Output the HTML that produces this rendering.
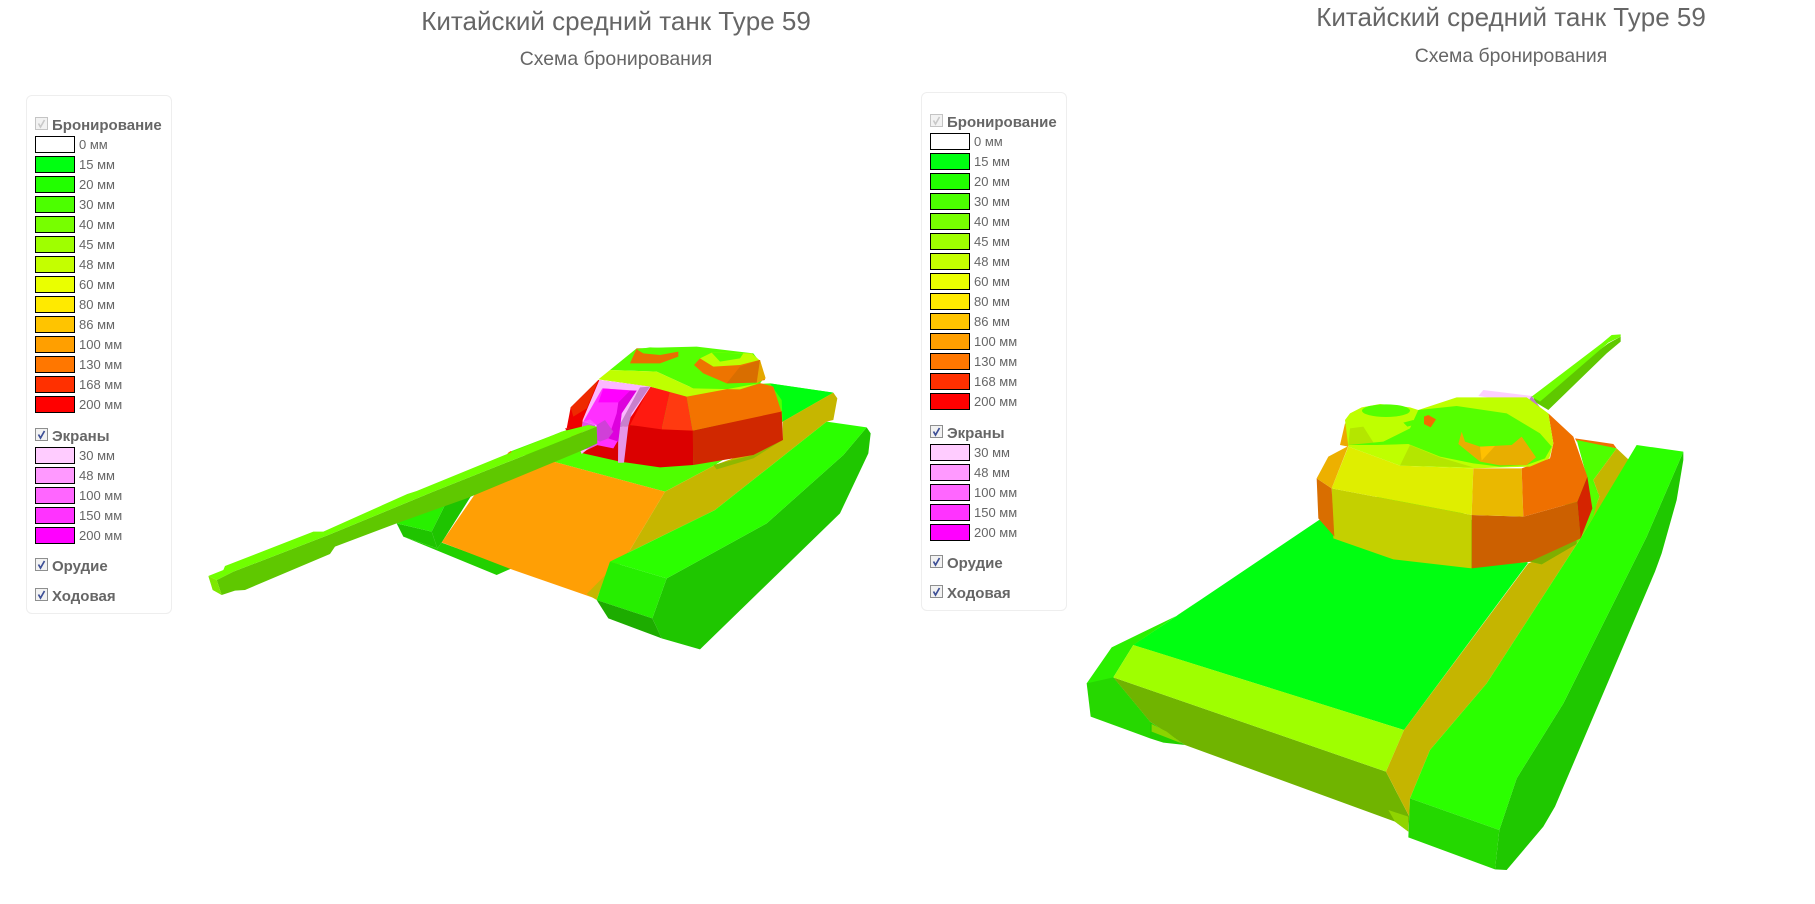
<!DOCTYPE html>
<html lang="ru"><head><meta charset="utf-8"><title>Type 59</title>
<style>
html,body{margin:0;padding:0;background:#fff;width:1815px;height:904px;overflow:hidden}
body{position:relative;font-family:"Liberation Sans",Arial,sans-serif;color:#666}
.t{position:absolute;white-space:nowrap;text-align:center;transform:translateX(-50%)}
.h{font-size:26px;line-height:30px}
.s{font-size:19.4px;line-height:22px}
.p{position:absolute;width:146px;height:519px;box-sizing:border-box;border:1px solid #eee;border-radius:6px;background:#fff}
.p div{position:absolute;white-space:nowrap}
.p .c{left:8px;width:13px;height:13px}
.p .c svg{display:block}
.p .b{left:25px;font-weight:bold;font-size:15px;line-height:17px;color:#666}
.p .w{left:8px;width:40px;height:17px;box-sizing:border-box;border:1px solid #000}
.p .l{left:52px;font-size:13px;line-height:17px;color:#666}
svg.m{position:absolute;left:0;top:0}
</style></head><body>

<svg class="m" width="1815" height="904" viewBox="0 0 1815 904" xmlns="http://www.w3.org/2000/svg">
<!-- LEFT TANK: far track -->
<g transform="translate(200 420) scale(.33333)">
<polygon fill="#22d000" points="610,350 712,385 725,368 935,445 890,465"/>
<polygon fill="#1fc400" points="590,310 695,335 712,385 610,350"/>
<polygon fill="#28f000" points="590,310 600,300 820,218 735,255 695,335"/>
<polygon fill="#1ec400" points="695,335 735,255 815,225 725,368 712,385"/>
</g>
<!-- hull -->
<g transform="translate(400 370) scale(.33333)">
<polygon fill="#4fff00" points="1110,40 1300,68 1148,155 945,285 795,365 460,275 330,245 500,180 700,60"/>
<polygon fill="#00ff11" points="1110,40 1300,68 1148,155 1145,90"/>
<polygon fill="#f07000" points="322,250 332,243 340,250 330,255"/>
<polygon fill="#ff9f05" points="460,275 795,365 690,540 585,685 340,600 125,517 228,368"/>
<polygon fill="#c6b600" points="795,365 945,285 1148,210 1148,155 1300,68 1312,85 1300,150 1280,155 945,420 630,575 590,690 560,672 690,540"/>
<polygon fill="#8fb800" points="940,285 950,298 1060,265 1140,215 1060,255"/>
<polygon fill="#1fc600" points="1400,172 1412,190 1405,250 1320,430 900,838 785,805 757,745 800,625 1100,460 1330,255"/>
<polygon fill="#2bff00" points="1280,155 1400,172 1330,255 1100,460 800,625 630,575 945,420"/>
<polygon fill="#26ee00" points="630,575 800,625 757,745 590,690"/>
<polygon fill="#1dac00" points="590,690 757,745 785,805 625,745"/>
</g>
<!-- left turret -->
<g transform="translate(540 330) scale(.33333)">
<polygon fill="#db0000" points="75,295 130,370 240,395 360,412 460,405 460,300 270,285"/>
<polygon fill="#d02800" points="458,302 725,243 729,330 640,375 460,405"/>
<polygon fill="#f00000" points="80,295 92,232 175,150 330,170 270,290"/>
<polygon fill="#ff1a10" points="330,170 390,185 365,298 270,285"/>
<polygon fill="#ff3a10" points="390,185 440,200 458,302 365,298"/>
<polygon fill="#ee2a00" points="92,232 175,150 140,235 100,260"/>
<polygon fill="#f37300" points="440,200 655,158 700,170 724,245 458,302"/>
<polygon fill="#55ff00" points="210,120 290,55 380,52 470,50 640,70 655,90 675,140 660,160 600,178 460,175 350,125"/>
<polygon fill="#bfff00" points="175,148 210,120 350,125 460,175 600,178 680,152 655,160 440,200 330,170"/>
<polygon fill="#e87000" points="270,100 290,55 415,65 415,80 360,100"/>
<polygon fill="#55ff00" points="290,58 330,52 390,55 415,65 360,75 310,70"/>
<polygon fill="#ee7400" points="462,105 480,85 660,90 675,150 650,155 560,160 490,130"/>
<polygon fill="#d96e00" points="560,160 600,110 660,90 650,158"/>
<polygon fill="#e5a800" points="660,90 677,145 650,160"/>
<polygon fill="#bfff00" points="480,85 515,68 635,70 658,90 600,105 520,110"/>
<polygon fill="#55ff00" points="515,68 610,70 600,85 540,95"/>
</g>
<!-- mantlet -->
<g transform="translate(400 370) scale(.33333)">
<polygon fill="#fbb8ff" points="598,30 752,50 700,130 672,170 670,278 655,278 655,195 560,240 545,252 540,240 548,150"/>
<polygon fill="#c880cc" points="720,52 750,50 695,130 685,168 655,172"/>
<polygon fill="#e596e8" points="655,172 685,168 672,278 654,278 655,205"/>
<polygon fill="#ff30ff" points="607,55 710,62 665,130 655,210 640,235 590,225 590,165 550,155"/>
<polygon fill="#ff00ff" points="610,55 690,62 655,97 595,97"/>
<polygon fill="#dd00dd" points="690,62 710,62 665,130 655,215 625,205 650,130 655,97"/>
<polygon fill="#d040d8" points="590,165 615,150 640,185 625,205 600,215 590,210"/>
<polygon fill="#e050e8" points="548,155 585,165 590,225 570,235 540,240"/>
<polygon fill="#ff50ff" points="550,155 570,148 590,165"/>
</g>
<!-- left gun -->
<g transform="translate(200 420) scale(.33333)">
<polygon fill="#5fc800" points="50,480 100,455 385,345 700,215 1190,20 1192,70 1150,90 800,235 590,310 405,380 390,402 135,510 105,512 65,525"/>
<polygon fill="#70ff00" points="25,468 70,450 75,438 340,335 370,335 622,222 650,213 1085,35 1165,15 1190,20 700,215 385,345 100,455 50,480"/>
<polygon fill="#7de800" points="25,468 50,480 65,525 38,510"/>
</g>

<!-- RIGHT TANK -->
<g transform="translate(1300 320) scale(.33333)">
<polygon fill="#5fc800" points="695,240 925,70 962,50 962,65 920,100 745,270"/>
<polygon fill="#70ff00" points="695,230 905,70 935,45 962,43 962,50 925,68 720,245"/>
<polygon fill="#fdcfff" points="535,228 550,210 695,228 680,250"/>
<polygon fill="#c07cc8" points="680,250 695,228 720,262"/>
</g>
<!-- deck (page coordinates) -->
<polygon fill="#00ff11" points="1319,520 1178,615 1133,645 1404,730 1528,563 1420,480"/>
<!-- front -->
<g transform="translate(1070 600) scale(.33333)">
<polygon fill="#2bf000" points="50,250 125,142 325,45 390,0 190,135 130,232 240,365"/>
<polygon fill="#26d800" points="50,250 130,232 240,365 240,415 62,350"/>
<polygon fill="#22d000" points="240,365 345,435 280,428 240,415"/>
<polygon fill="#70b400" points="130,232 948,515 1018,650 1015,695 975,665 345,435 240,365"/>
<polygon fill="#8ad400" points="245,372 290,395 335,430 245,395"/>
<polygon fill="#9fff00" points="190,135 1002,390 948,515 130,232"/>
<polygon fill="#90d400" points="955,630 1015,650 1015,695 975,665"/>
</g>
<!-- side band and near track -->
<g transform="translate(1400 430) scale(.33333)">
<polygon fill="#f07000" points="525,25 640,42 650,55 530,35"/>
<polygon fill="#4fff00" points="530,30 650,55 580,150 598,200 575,260 540,325 395,395 360,400 560,140"/>
<polygon fill="#c5b500" points="12,900 385,400 530,340 575,260 598,200 580,150 650,55 685,88 600,230 545,320 260,760 90,960 30,1105 28,1160 -42,1025"/>
<polygon fill="#1fc800" points="850,65 850,90 830,210 785,370 765,425 465,1130 430,1190 320,1320 285,1318 298,1200 350,1045 490,820 740,320"/>
<polygon fill="#2bff00" points="710,45 850,65 740,320 490,820 350,1045 298,1200 30,1105 90,960 260,760 545,320"/>
<polygon fill="#24d800" points="30,1105 298,1200 285,1318 25,1222"/>
</g>
<!-- right turret -->
<g transform="translate(1300 320) scale(.33333)">
<polygon fill="#55ff00" points="820,365 860,465 897,525 880,590 830,670 725,733 690,725 830,660"/>
<polygon fill="#7fae00" points="690,725 725,733 830,672 830,660"/>
<polygon fill="#c4d000" points="95,505 515,585 515,745 280,718 100,655"/>
<polygon fill="#d96e00" points="50,475 95,505 103,650 55,595"/>
<polygon fill="#cc6000" points="515,585 670,590 832,545 842,655 690,725 515,745"/>
<polygon fill="#d52400" points="832,545 862,470 877,565 842,655"/>
<polygon fill="#dfee00" points="145,380 300,437 520,445 515,585 95,505"/>
<polygon fill="#eab800" points="520,445 665,445 670,590 515,585"/>
<polygon fill="#ef7000" points="665,445 750,415 760,370 745,280 820,350 862,470 832,545 670,590"/>
<polygon fill="#edb000" points="50,475 85,410 145,378 95,505"/>
<polygon fill="#eda800" points="120,375 135,310 155,320 145,380"/>
<polygon fill="#bfff00" points="135,300 150,280 185,262 240,252 330,262 355,270 470,232 680,232 745,280 760,370 748,415 690,440 520,445 300,437 145,380"/>
<polygon fill="#b4e600" points="145,375 150,325 190,320 225,375"/>
<polygon fill="#55ff00" points="145,375 250,365 330,325 355,270 470,258 620,280 720,340 755,380 735,415 680,435 600,440 520,430 420,410 325,372 230,375"/>
<polygon fill="#b4e600" points="300,437 330,375 420,412 520,442"/>
<polygon fill="#e8ae00" points="485,335 475,372 540,425 600,436 680,435 708,412 665,350 635,375 540,380 495,365"/>
<polygon fill="#ffc000" points="540,380 585,378 545,422"/>
<ellipse fill="#55ff00" cx="258" cy="272" rx="72" ry="19"/>
<polygon fill="#f26c00" points="372,290 385,285 408,298 392,322 372,312"/>
<polygon fill="#55ff00" points="310,308 340,300 352,312 322,320"/>
</g>
</svg>

<div class="t h" style="left:616px;top:6px">Китайский средний танк Type 59</div>
<div class="t s" style="left:616px;top:48px">Схема бронирования</div>
<div class="t h" style="left:1511px;top:2px">Китайский средний танк Type 59</div>
<div class="t s" style="left:1511px;top:45px">Схема бронирования</div>

<!-- LEFT PANEL -->
<div class="p" style="left:26px;top:95px">
<div class="c" style="top:21px"><svg width="13" height="13"><rect x=".5" y=".5" width="12" height="12" fill="#f2f2f2" stroke="#c4c4c4"/><path d="M3.5 6.5l2 3.5 4-7" fill="none" stroke="#c8c8c8" stroke-width="1.6"/></svg></div>
<div class="b" style="top:21px">Бронирование</div>
<div class="w" style="top:40px;background:#fff"></div><div class="l" style="top:40px">0 мм</div>
<div class="w" style="top:60px;background:#00ff11"></div><div class="l" style="top:60px">15 мм</div>
<div class="w" style="top:80px;background:#22ff00"></div><div class="l" style="top:80px">20 мм</div>
<div class="w" style="top:100px;background:#4cff00"></div><div class="l" style="top:100px">30 мм</div>
<div class="w" style="top:120px;background:#77ff00"></div><div class="l" style="top:120px">40 мм</div>
<div class="w" style="top:140px;background:#9fff00"></div><div class="l" style="top:140px">45 мм</div>
<div class="w" style="top:160px;background:#c4ff00"></div><div class="l" style="top:160px">48 мм</div>
<div class="w" style="top:180px;background:#eaff00"></div><div class="l" style="top:180px">60 мм</div>
<div class="w" style="top:200px;background:#ffea00"></div><div class="l" style="top:200px">80 мм</div>
<div class="w" style="top:220px;background:#ffc400"></div><div class="l" style="top:220px">86 мм</div>
<div class="w" style="top:240px;background:#ff9f00"></div><div class="l" style="top:240px">100 мм</div>
<div class="w" style="top:260px;background:#ff7700"></div><div class="l" style="top:260px">130 мм</div>
<div class="w" style="top:280px;background:#ff3000"></div><div class="l" style="top:280px">168 мм</div>
<div class="w" style="top:300px;background:#ff0000"></div><div class="l" style="top:300px">200 мм</div>
<div class="c" style="top:332px"><svg width="13" height="13"><rect x=".5" y=".5" width="12" height="12" fill="#f2f2f2" stroke="#8e8f8f"/><path d="M3.5 6.5l2 3.5 4-7" fill="none" stroke="#3d4f96" stroke-width="1.7"/></svg></div>
<div class="b" style="top:332px">Экраны</div>
<div class="w" style="top:351px;background:#ffccff"></div><div class="l" style="top:351px">30 мм</div>
<div class="w" style="top:371px;background:#ff99ff"></div><div class="l" style="top:371px">48 мм</div>
<div class="w" style="top:391px;background:#ff66ff"></div><div class="l" style="top:391px">100 мм</div>
<div class="w" style="top:411px;background:#ff33ff"></div><div class="l" style="top:411px">150 мм</div>
<div class="w" style="top:431px;background:#ff00ff"></div><div class="l" style="top:431px">200 мм</div>
<div class="c" style="top:462px"><svg width="13" height="13"><rect x=".5" y=".5" width="12" height="12" fill="#f2f2f2" stroke="#8e8f8f"/><path d="M3.5 6.5l2 3.5 4-7" fill="none" stroke="#3d4f96" stroke-width="1.7"/></svg></div>
<div class="b" style="top:462px">Орудие</div>
<div class="c" style="top:492px"><svg width="13" height="13"><rect x=".5" y=".5" width="12" height="12" fill="#f2f2f2" stroke="#8e8f8f"/><path d="M3.5 6.5l2 3.5 4-7" fill="none" stroke="#3d4f96" stroke-width="1.7"/></svg></div>
<div class="b" style="top:492px">Ходовая</div>
</div>

<!-- RIGHT PANEL -->
<div class="p" style="left:921px;top:92px">
<div class="c" style="top:21px"><svg width="13" height="13"><rect x=".5" y=".5" width="12" height="12" fill="#f2f2f2" stroke="#c4c4c4"/><path d="M3.5 6.5l2 3.5 4-7" fill="none" stroke="#c8c8c8" stroke-width="1.6"/></svg></div>
<div class="b" style="top:21px">Бронирование</div>
<div class="w" style="top:40px;background:#fff"></div><div class="l" style="top:40px">0 мм</div>
<div class="w" style="top:60px;background:#00ff11"></div><div class="l" style="top:60px">15 мм</div>
<div class="w" style="top:80px;background:#22ff00"></div><div class="l" style="top:80px">20 мм</div>
<div class="w" style="top:100px;background:#4cff00"></div><div class="l" style="top:100px">30 мм</div>
<div class="w" style="top:120px;background:#77ff00"></div><div class="l" style="top:120px">40 мм</div>
<div class="w" style="top:140px;background:#9fff00"></div><div class="l" style="top:140px">45 мм</div>
<div class="w" style="top:160px;background:#c4ff00"></div><div class="l" style="top:160px">48 мм</div>
<div class="w" style="top:180px;background:#eaff00"></div><div class="l" style="top:180px">60 мм</div>
<div class="w" style="top:200px;background:#ffea00"></div><div class="l" style="top:200px">80 мм</div>
<div class="w" style="top:220px;background:#ffc400"></div><div class="l" style="top:220px">86 мм</div>
<div class="w" style="top:240px;background:#ff9f00"></div><div class="l" style="top:240px">100 мм</div>
<div class="w" style="top:260px;background:#ff7700"></div><div class="l" style="top:260px">130 мм</div>
<div class="w" style="top:280px;background:#ff3000"></div><div class="l" style="top:280px">168 мм</div>
<div class="w" style="top:300px;background:#ff0000"></div><div class="l" style="top:300px">200 мм</div>
<div class="c" style="top:332px"><svg width="13" height="13"><rect x=".5" y=".5" width="12" height="12" fill="#f2f2f2" stroke="#8e8f8f"/><path d="M3.5 6.5l2 3.5 4-7" fill="none" stroke="#3d4f96" stroke-width="1.7"/></svg></div>
<div class="b" style="top:332px">Экраны</div>
<div class="w" style="top:351px;background:#ffccff"></div><div class="l" style="top:351px">30 мм</div>
<div class="w" style="top:371px;background:#ff99ff"></div><div class="l" style="top:371px">48 мм</div>
<div class="w" style="top:391px;background:#ff66ff"></div><div class="l" style="top:391px">100 мм</div>
<div class="w" style="top:411px;background:#ff33ff"></div><div class="l" style="top:411px">150 мм</div>
<div class="w" style="top:431px;background:#ff00ff"></div><div class="l" style="top:431px">200 мм</div>
<div class="c" style="top:462px"><svg width="13" height="13"><rect x=".5" y=".5" width="12" height="12" fill="#f2f2f2" stroke="#8e8f8f"/><path d="M3.5 6.5l2 3.5 4-7" fill="none" stroke="#3d4f96" stroke-width="1.7"/></svg></div>
<div class="b" style="top:462px">Орудие</div>
<div class="c" style="top:492px"><svg width="13" height="13"><rect x=".5" y=".5" width="12" height="12" fill="#f2f2f2" stroke="#8e8f8f"/><path d="M3.5 6.5l2 3.5 4-7" fill="none" stroke="#3d4f96" stroke-width="1.7"/></svg></div>
<div class="b" style="top:492px">Ходовая</div>
</div>
</body></html>
